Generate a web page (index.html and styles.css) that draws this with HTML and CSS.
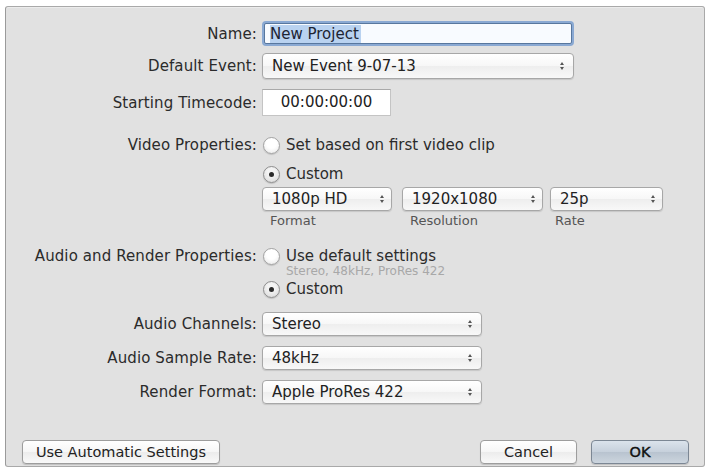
FILE: index.html
```html
<!DOCTYPE html>
<html>

<head>
    <meta charset="utf-8">
    <meta name="viewport" content="width=device-width, initial-scale=1.0">
    <title>New Project</title>
    <link rel="stylesheet" href="styles.css">
</head>

<body>
    <div class="sheet">
        <div class="form">
            <div class="row r-name">
                <label class="lbl">Name:</label>
                <div class="name-field"><span class="selected">New Project</span></div>
            </div>
            <div class="row r-event">
                <label class="lbl">Default Event:</label>
                <div class="popup w-event"><span>New Event 9-07-13</span><i class="arrows"></i></div>
            </div>
            <div class="row r-tc">
                <label class="lbl">Starting Timecode:</label>
                <div class="timecode">00:00:00:00</div>
            </div>
            <div class="row r-video">
                <label class="lbl">Video Properties:</label>
                <div class="radio"><span class="circle"></span>Set based on first video clip</div>
            </div>
            <div class="row r-custom">
                <span class="lbl"></span>
                <div class="radio"><span class="circle on"></span>Custom</div>
            </div>
            <div class="row r-selects">
                <span class="lbl"></span>
                <div class="triple">
                    <div class="popup w-format"><span>1080p HD</span><i class="arrows"></i></div>
                    <div class="popup w-res"><span>1920x1080</span><i class="arrows"></i></div>
                    <div class="popup w-rate"><span>25p</span><i class="arrows"></i></div>
                </div>
            </div>
            <div class="row r-sub">
                <span class="lbl"></span>
                <div class="triple sub">
                    <span class="w-format">Format</span>
                    <span class="w-res">Resolution</span>
                    <span class="w-rate">Rate</span>
                </div>
            </div>
            <div class="row r-audio">
                <label class="lbl">Audio and Render Properties:</label>
                <div class="radio"><span class="circle"></span>Use default settings</div>
            </div>
            <div class="row r-desc">
                <span class="lbl"></span>
                <div class="desc">Stereo, 48kHz, ProRes 422</div>
            </div>
            <div class="row r-custom2">
                <span class="lbl"></span>
                <div class="radio"><span class="circle on"></span>Custom</div>
            </div>
            <div class="row r-ch">
                <label class="lbl">Audio Channels:</label>
                <div class="popup w-audio"><span>Stereo</span><i class="arrows"></i></div>
            </div>
            <div class="row r-sr">
                <label class="lbl">Audio Sample Rate:</label>
                <div class="popup w-audio"><span>48kHz</span><i class="arrows"></i></div>
            </div>
            <div class="row r-rf">
                <label class="lbl">Render Format:</label>
                <div class="popup w-audio"><span>Apple ProRes 422</span><i class="arrows"></i></div>
            </div>
        </div>
        <div class="buttons">
            <button class="btn auto">Use Automatic Settings</button>
            <div class="spacer"></div>
            <button class="btn cancel">Cancel</button>
            <button class="btn ok">OK</button>
        </div>
    </div>
</body>

</html>
```

FILE: styles.css
```css
* {
    padding: 0;
    margin: 0;
    box-sizing: border-box;
}

body {
    background: #ffffff;
    font-family: "DejaVu Sans", sans-serif;
    font-size: 15px;
    color: #2b2b2b;
}

.sheet {
    margin: 6px 0 0 5px;
    width: 700px;
    height: 461px;
    border: 1px solid #a9a9a9;
    border-left-color: #9a9a9a;
    border-radius: 3px;
    background: #e1e1e1;
    box-shadow: inset 0 1px 0 #ececec;
}

.form {
    padding-top: 14px;
}

.row {
    display: flex;
    align-items: center;
    gap: 5px;
}

.lbl {
    width: 251px;
    flex: none;
    text-align: right;
    letter-spacing: 0.1px;
}

/* row heights + spacing */
.r-name { height: 25px; }
.r-event { height: 26px; margin-top: 7px; }
.r-tc { height: 27px; margin-top: 10px; }
.r-video { height: 20px; margin-top: 19px; }
.r-custom { height: 20px; margin-top: 9px; }
.r-selects { height: 24px; margin-top: 3px; }
.r-sub { height: 15px; margin-top: 2px; }
.r-audio { height: 18px; margin-top: 19px; }
.r-desc { height: 13px; }
.r-custom2 { height: 20px; margin-top: 1px; }
.r-ch { height: 24px; margin-top: 13px; }
.r-sr { height: 24px; margin-top: 10px; }
.r-rf { height: 24px; margin-top: 10px; }

.name-field {
    margin-left: 2px;
    width: 308px;
    height: 21px;
    background: #f8fbff;
    border: 1px solid #58779e;
    border-radius: 2px;
    box-shadow: 0 0 0 2px #8aa9d3;
    padding-left: 5px;
    display: flex;
    align-items: center;
    color: #1d2433;
}

.selected {
    background: #b9d2f0;
    padding-right: 2px;
}

.popup {
    height: 24px;
    border: 1px solid #a7a7a7;
    border-radius: 4px;
    background: linear-gradient(#ffffff, #f7f7f7 50%, #eeeeee 51%, #f8f8f8);
    box-shadow: 0 1px 1px rgba(0, 0, 0, 0.12);
    display: flex;
    align-items: center;
    justify-content: space-between;
    padding: 0 7px 0 9px;
    color: #222;
}

.w-event { width: 312px; height: 26px; padding-right: 9px; }
.w-format { width: 130px; }
.w-res { width: 141px; }
.w-rate { width: 113px; }
.w-audio { width: 220px; padding-right: 9px; }

.arrows {
    display: flex;
    flex-direction: column;
    gap: 2px;
    align-items: center;
}

.arrows::before,
.arrows::after {
    content: "";
    width: 0;
    height: 0;
    border-left: 2.5px solid transparent;
    border-right: 2.5px solid transparent;
}

.arrows::before {
    border-bottom: 3px solid #555;
}

.arrows::after {
    border-top: 3px solid #555;
}

.timecode {
    width: 129px;
    height: 27px;
    background: #ffffff;
    border: 1px solid #c4c4c4;
    border-top-color: #a9a9a9;
    text-align: center;
    line-height: 25px;
    color: #222;
}

.radio {
    display: flex;
    align-items: center;
    gap: 6px;
    margin-left: 1px;
}

.circle {
    width: 17px;
    height: 17px;
    border-radius: 50%;
    border: 1px solid #a3a3a3;
    background: radial-gradient(circle at 50% 35%, #ffffff 40%, #e6e6e6);
    box-shadow: 0 1px 1px rgba(0, 0, 0, 0.15);
    display: flex;
    align-items: center;
    justify-content: center;
}

.circle.on {
    border-color: #8e8e8e;
    background: radial-gradient(circle at 50% 35%, #f4f4f4 30%, #d6d6d6);
}

.circle.on::after {
    content: "";
    width: 5px;
    height: 5px;
    border-radius: 50%;
    background: #2a2a2a;
}

.triple {
    display: flex;
    gap: 10px;
}

.triple .w-rate {
    margin-left: -3px;
}

.sub {
    font-size: 13px;
    color: #555;
}

.sub span {
    padding-left: 8px;
}

.sub .w-rate {
    padding-left: 5px;
}

.desc {
    font-size: 12px;
    color: #a8a8a8;
    padding-left: 24px;
    line-height: 13px;
}

.buttons {
    display: flex;
    align-items: center;
    margin-top: 36px;
    padding: 0 15px 0 16px;
}

.spacer {
    flex: 1;
}

.btn {
    height: 24px;
    border: 1px solid #9d9d9d;
    border-radius: 4px;
    background: linear-gradient(#ffffff, #f6f6f6 50%, #ececec 51%, #f9f9f9);
    box-shadow: 0 1px 1px rgba(0, 0, 0, 0.15);
    font-family: "DejaVu Sans", sans-serif;
    font-size: 14.5px;
    color: #222;
}

.auto { width: 198px; }
.cancel { width: 97px; }

.ok {
    width: 98px;
    margin-left: 14px;
    border-color: #7c8794;
    background: linear-gradient(#dbe3ec, #c6d0db 50%, #b8c3cf 51%, #ccd5de);
    color: #111;
    -webkit-text-stroke: 0.4px #111;
}
```
